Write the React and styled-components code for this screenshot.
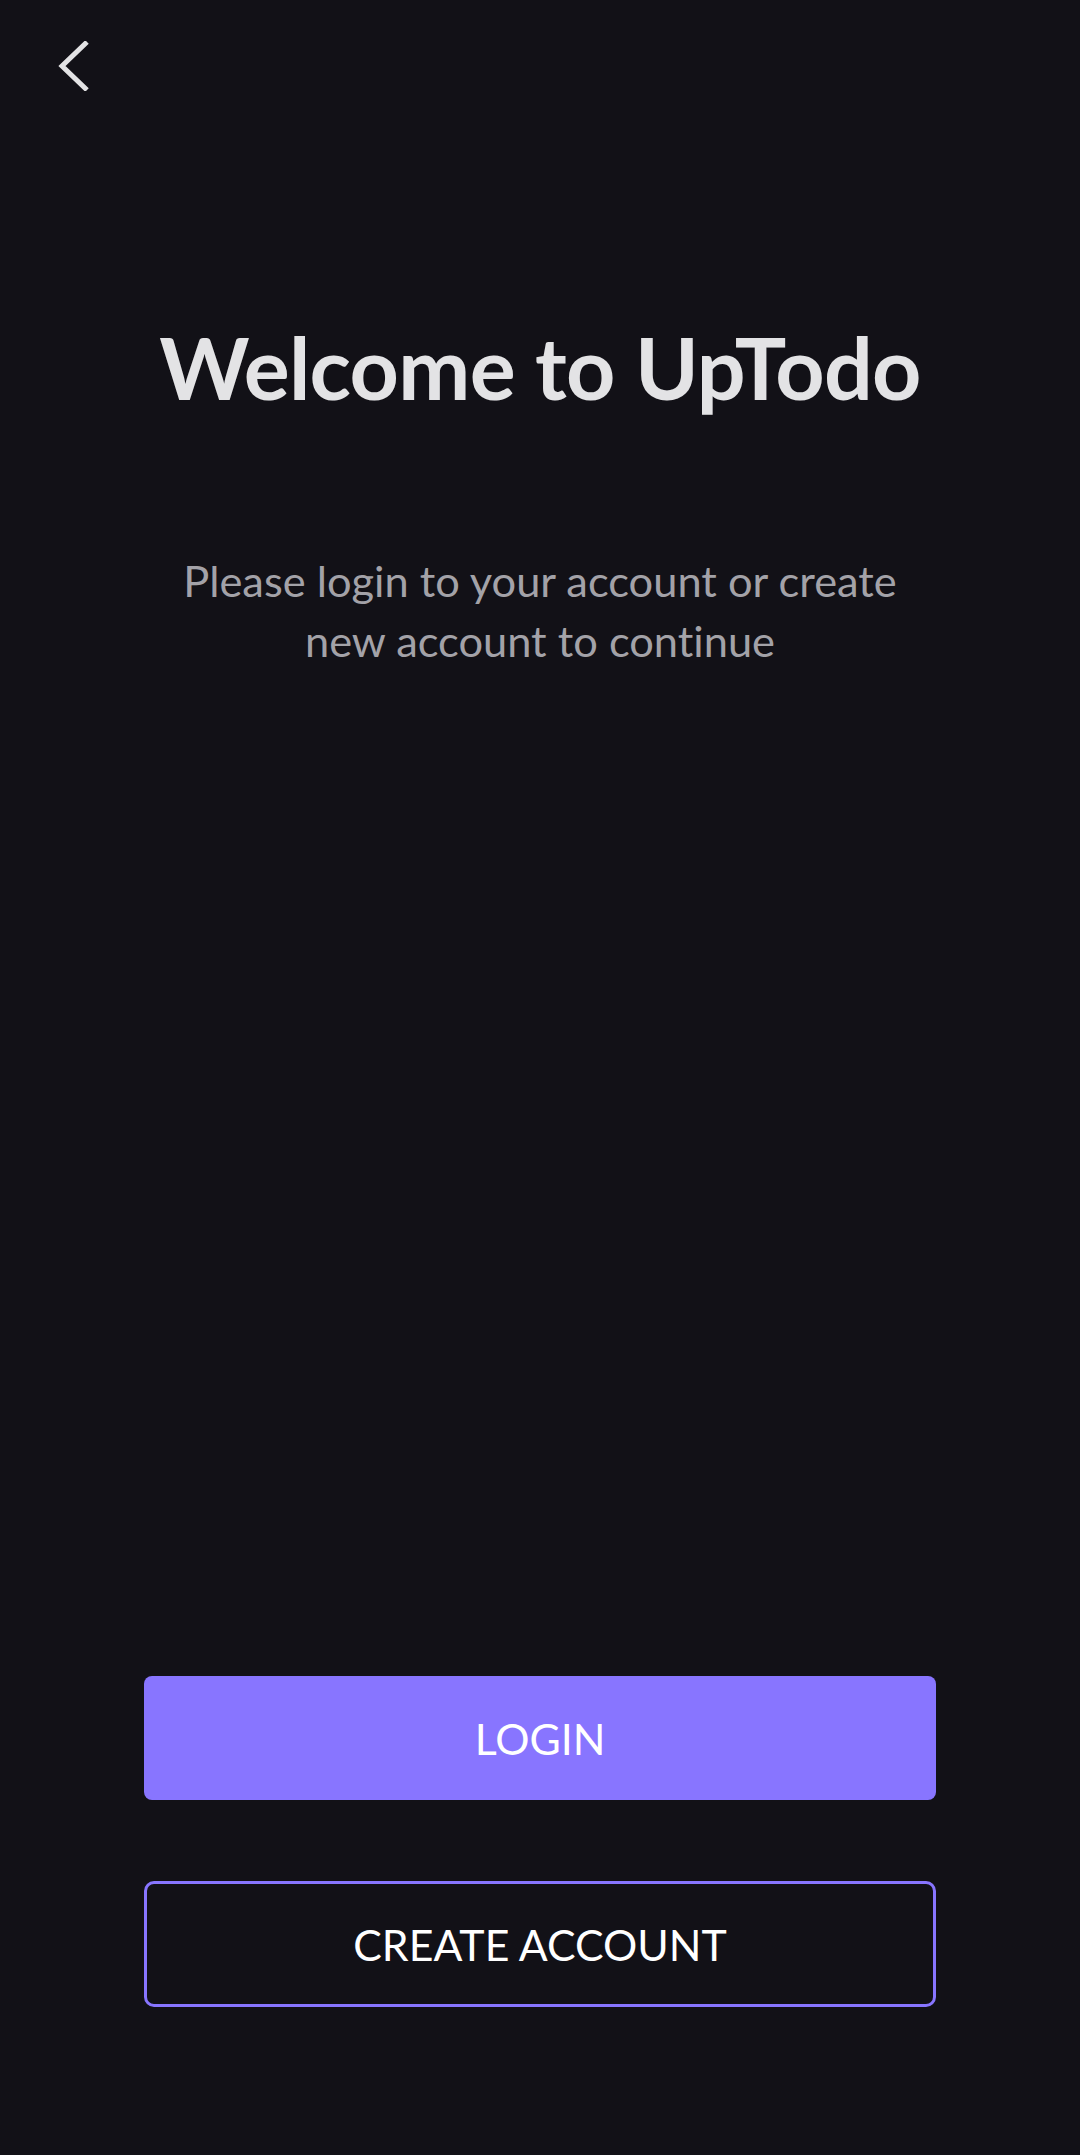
import React from "react";
import styled, { createGlobalStyle } from "styled-components";

const GlobalStyle = createGlobalStyle`
  html, body {
    margin: 0;
    padding: 0;
    background: #121117;
  }
  * {
    box-sizing: border-box;
  }
`;

const Screen = styled.div`
  display: flex;
  flex-direction: column;
  min-height: 2155px;
  background: #121117;
  font-family: "Lato", "Open Sans", sans-serif;
  font-variant-ligatures: none;
  padding: 41px 144px 148px;
`;

const TopBar = styled.div`
  display: flex;
  align-items: center;
  height: 50px;
  margin-left: -89px;
`;

const BackButton = styled.button`
  width: 40px;
  height: 50px;
  padding: 0;
  border: none;
  background: transparent;
  cursor: pointer;
  display: flex;
  align-items: center;
  justify-content: center;
`;

const Title = styled.h1`
  margin: 233px -40px 0;
  text-align: center;
  font-size: 86px;
  font-weight: 700;
  line-height: 1;
  letter-spacing: -0.7px;
  color: #e3e3e5;
  white-space: nowrap;
`;

const Subtitle = styled.p`
  margin: 140px -20px 0;
  text-align: center;
  font-size: 43.4px;
  line-height: 60px;
  font-weight: 400;
  color: #a3a2a8;
`;

const Actions = styled.div`
  margin-top: auto;
  display: flex;
  flex-direction: column;
  gap: 81px;
`;

const Button = styled.button`
  width: 100%;
  height: ${(p) => (p.$outline ? "126px" : "124px")};
  border-radius: ${(p) => (p.$outline ? "10px" : "8px")};
  border: ${(p) => (p.$outline ? "3px solid #8875ff" : "none")};
  background: ${(p) => (p.$outline ? "transparent" : "#8875ff")};
  color: #ffffff;
  font-family: "Lato", sans-serif;
  font-variant-ligatures: none;
  font-size: 42.8px;
  font-weight: 400;
  cursor: pointer;
`;

const App = () => {
  return (
    <>
      <GlobalStyle />
      <Screen>
        <TopBar>
          <BackButton aria-label="Back">
            <svg width="40" height="50" viewBox="0 0 40 50">
              <path
                d="M32 1 L7 25 L32 49"
                fill="none"
                stroke="#e3e3e5"
                strokeWidth="5"
              />
            </svg>
          </BackButton>
        </TopBar>

        <Title>Welcome to UpTodo</Title>
        <Subtitle>
          Please login to your account or create
          <br />
          new account to continue
        </Subtitle>

        <Actions>
          <Button>LOGIN</Button>
          <Button $outline>CREATE ACCOUNT</Button>
        </Actions>
      </Screen>
    </>
  );
};

export default App;
